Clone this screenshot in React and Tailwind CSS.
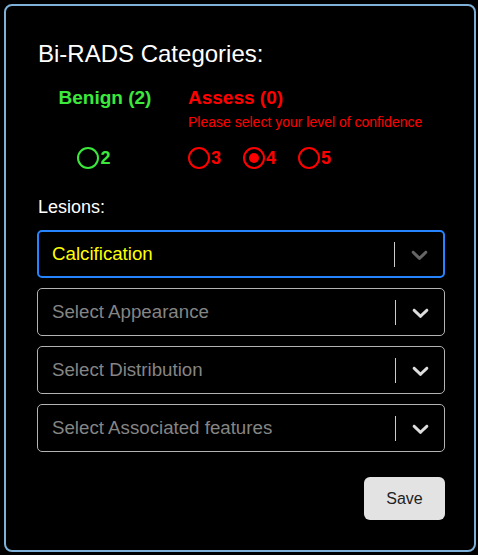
const FONT = { fontFamily: '"Liberation Sans", Arial, Helvetica, sans-serif' };

const Chevron = ({ className }) => (
    <svg viewBox="0 0 20 20" width="27" height="27" fill="currentColor" className={className}>
        <path d="M4.516 7.548c0.436-0.446 1.043-0.481 1.576 0l3.908 3.747 3.908-3.747c0.533-0.481 1.141-0.446 1.574 0 0.436 0.445 0.408 1.197 0 1.615-0.406 0.418-4.695 4.502-4.695 4.502-0.217 0.223-0.502 0.335-0.787 0.335s-0.57-0.112-0.789-0.335c0 0-4.287-4.084-4.695-4.502s-0.436-1.17 0-1.615z" />
    </svg>
);

const Radio = ({ label, color, checked }) => (
    <div className={`flex items-center mr-[22px] ${color}`}>
        <div className="w-[22px] h-[22px] rounded-full border-2 border-current flex items-center justify-center">
            {checked && <div className="w-[10px] h-[10px] rounded-full bg-current" />}
        </div>
        <span className="ml-[1px] text-[18px] font-bold leading-[22px]">{label}</span>
    </div>
);

const Select = ({ value, placeholder, focused }) => (
    <div
        className={`flex items-center h-[48px] rounded-[5px] ${focused ? 'border-2 border-[#2684ff] pl-[13px]' : 'border border-[#b3b3b3] pl-[14px]'
            }`}
    >
        <div className={`flex-1 text-[18.7px] leading-[24px] ${value ? 'text-[#ffff00]' : 'text-[#858585]'}`}>
            {value || placeholder}
        </div>
        <div className="w-px h-[25px] bg-[#cccccc]" />
        <div className="w-[48px] flex items-center justify-center">
            <Chevron className={focused ? 'text-[#666666]' : 'text-[#dddddd]'} />
        </div>
    </div>
);

export default function App() {
    return (
        <div className="w-[478px] h-[555px] bg-black pt-[4px] pl-[4px]" style={FONT}>
            <div className="w-[472px] h-[548px] rounded-[8px] border-2 border-[#7fb0d8] bg-black pt-[34px] pl-[31px] pr-[29px] flex flex-col">
                <h2 className="text-[24px] leading-[28px] text-white pl-[1px]">Bi-RADS Categories:</h2>

                <div className="grid grid-cols-[136px_auto] gap-x-[15px] mt-[19px]">
                    <div className="text-center text-[19px] font-bold leading-[22px] text-[#3ce83c]">Benign (2)</div>
                    <div className="text-[19px] font-bold leading-[22px] text-[#ff0000]">Assess (0)</div>
                    <div />
                    <div className="text-[14px] leading-[16px] text-[#ff0000] mt-[5px]">
                        Please select your level of confidence
                    </div>
                    <div className="flex justify-center mt-[17px]">
                        <Radio label="2" color="text-[#3ce83c]" />
                    </div>
                    <div className="flex mt-[17px]">
                        <Radio label="3" color="text-[#ff0000]" />
                        <Radio label="4" color="text-[#ff0000]" checked />
                        <Radio label="5" color="text-[#ff0000]" />
                    </div>
                </div>

                <div className="text-[18px] leading-[22px] text-white mt-[27px] pl-[1px]">Lesions:</div>

                <div className="flex flex-col gap-[10px] mt-[12px]">
                    <Select value="Calcification" focused />
                    <Select placeholder="Select Appearance" />
                    <Select placeholder="Select Distribution" />
                    <Select placeholder="Select Associated features" />
                </div>

                <div className="flex justify-end mt-[25px]">
                    <button className="w-[81px] h-[43px] rounded-[6px] bg-[#e3e3e3] text-[16px] text-[#222222]">
                        Save
                    </button>
                </div>
            </div>
        </div>
    );
}
